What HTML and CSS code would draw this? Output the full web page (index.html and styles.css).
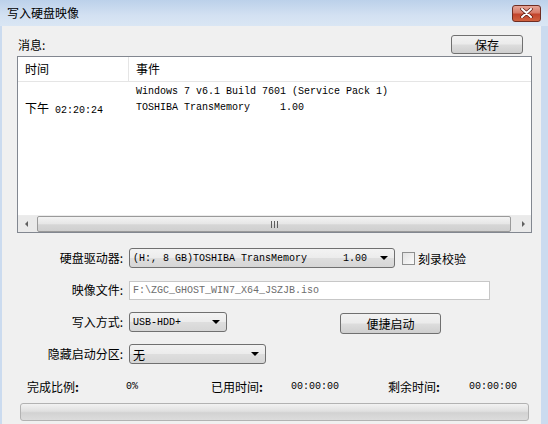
FILE: index.html
```html
<!DOCTYPE html>
<html lang="zh-CN">
<head>
   <meta charset="UTF-8">
   <title>写入硬盘映像</title>
   <link rel="stylesheet" href="styles.css">
</head>
<body>
   <div class="window">
      <div class="titlebar">
         <span class="title">写入硬盘映像</span>
         <span class="close-btn">
            <svg width="13" height="10" viewBox="0 0 13 10">
               <path d="M2 1 L11 9 M11 1 L2 9" stroke="#5a1a10" stroke-width="3.4" stroke-linecap="round"/>
               <path d="M2 1 L11 9 M11 1 L2 9" stroke="#fff" stroke-width="2" stroke-linecap="round"/>
            </svg>
         </span>
      </div>
      <div class="client">
         <div class="msg-head">
            <span>消息:</span>
            <span class="btn save-btn">保存</span>
         </div>
         <div class="list">
            <div class="list-head">
               <div class="col-time">时间</div>
               <div class="col-event">事件</div>
            </div>
            <div class="list-body">
               <div class="cell-time"></div>
               <div class="cell-event">Windows 7 v6.1 Build 7601 (Service Pack 1)</div>
               <div class="cell-time"><span class="cjk">下午</span> 02:20:24</div>
               <div class="cell-event">TOSHIBA TransMemory     1.00</div>
            </div>
            <div class="hscroll">
               <span class="sb-arrow sb-left"></span>
               <div class="sb-track">
                  <div class="sb-thumb"><span class="grip"></span></div>
               </div>
               <span class="sb-arrow sb-right"></span>
            </div>
         </div>

         <div class="form">
            <label>硬盘驱动器:</label>
            <div class="ctrl-row">
               <div class="combo combo-drive"><span class="mono">(H:, 8 GB)TOSHIBA TransMemory      1.00</span><i class="arrow"></i></div>
               <span class="checkbox"></span>
               <span>刻录校验</span>
            </div>

            <label>映像文件:</label>
            <div class="ctrl-row">
               <div class="textbox mono">F:\ZGC_GHOST_WIN7_X64_JSZJB.iso</div>
            </div>

            <label>写入方式:</label>
            <div class="ctrl-row">
               <div class="combo combo-mode"><span class="mono">USB-HDD+</span><i class="arrow"></i></div>
               <span class="btn quick-btn">便捷启动</span>
            </div>

            <label>隐藏启动分区:</label>
            <div class="ctrl-row">
               <div class="combo combo-hide"><span>无</span><i class="arrow"></i></div>
            </div>
         </div>

         <div class="stats">
            <span>完成比例<b>:</b></span>
            <span class="mono">0%</span>
            <span>已用时间<b>:</b></span>
            <span class="mono">00:00:00</span>
            <span>剩余时间<b>:</b></span>
            <span class="mono">00:00:00</span>
         </div>

         <div class="progress"></div>
      </div>
   </div>
</body>
</html>
```

FILE: styles.css
```css
* {
   box-sizing: border-box;
}
body {
   margin: 0;
   width: 548px;
   height: 424px;
   overflow: hidden;
   background: #f0f0f0;
   font-family: "Noto Sans CJK SC", "Liberation Sans", sans-serif;
   font-size: 12px;
   color: #000;
}
.mono {
   font-family: "Liberation Mono", "Noto Sans CJK SC", monospace;
   font-size: 10px;
   white-space: pre;
}
.cjk {
   font-family: "Noto Sans CJK SC", sans-serif;
   font-size: 12px;
}
.window {
   display: flex;
   flex-direction: column;
   height: 424px;
}
.titlebar {
   height: 26px;
   display: flex;
   align-items: center;
   justify-content: space-between;
   padding: 0 7px 0 7px;
   background: linear-gradient(#bcd1ea, #d3e1f2 60%, #dae6f4);
}
.title {
   font-size: 12px;
   line-height: 14px;
}
.close-btn {
   width: 29px;
   height: 17px;
   display: flex;
   align-items: center;
   justify-content: center;
   border: 1px solid #6f2d22;
   border-radius: 3px;
   background: linear-gradient(#e6a597, #d77b68 45%, #c2442c 55%, #d0623f);
}
.client {
   flex: 1;
   border-left: 2px solid #cbdbef;
   border-right: 7px solid #cbdbef;
   padding: 9px 9px 0 15px;
}
.msg-head {
   height: 19px;
   display: flex;
   align-items: center;
   justify-content: space-between;
   padding-left: 1px;
}
.btn {
   display: flex;
   align-items: center;
   justify-content: center;
   border: 1px solid #707070;
   border-radius: 3px;
   background: linear-gradient(#f2f2f2, #ebebeb 48%, #dddddd 52%, #cfcfcf);
   font-size: 12px;
}
.save-btn {
   width: 72px;
   height: 19px;
   margin-right: 9px;
}

/* list view */
.list {
   margin-top: 2px;
   height: 177px;
   border: 1px solid #828790;
   background: #fff;
   display: flex;
   flex-direction: column;
}
.list-head {
   height: 25px;
   display: flex;
   border-bottom: 1px solid #e5e5e5;
   line-height: 24px;
}
.col-time {
   width: 111px;
   padding-left: 7px;
   border-right: 1px solid #e5e5e5;
}
.col-event {
   padding-left: 7px;
}
.list-body {
   flex: 1;
   display: grid;
   grid-template-columns: 111px 1fr;
   grid-auto-rows: 16px;
   align-content: start;
   padding-top: 2px;
   font-family: "Liberation Mono", monospace;
   font-size: 10px;
   line-height: 16px;
   white-space: pre;
}
.cell-time {
   padding-left: 7px;
}
.cell-event {
   padding-left: 7px;
}
.hscroll {
   height: 17px;
   display: flex;
   background: #eaeaea;
   border-top: 1px solid #ececec;
}
.sb-arrow {
   width: 17px;
   position: relative;
}
.sb-arrow::after {
   content: "";
   position: absolute;
   top: 5px;
   border-top: 3px solid transparent;
   border-bottom: 3px solid transparent;
}
.sb-left::after {
   left: 7px;
   border-right: 3px solid #606060;
}
.sb-right::after {
   left: 8px;
   border-left: 3px solid #606060;
}
.sb-track {
   flex: 1;
   padding: 0 3px 0 2px;
}
.sb-thumb {
   height: 100%;
   border: 1px solid #9a9a9a;
   border-radius: 2px;
   background: linear-gradient(#f3f3f3, #e6e6e6 50%, #d6d6d6 55%, #cfcfcf);
   display: flex;
   align-items: center;
   justify-content: center;
}
.grip {
   width: 7px;
   height: 7px;
   background: repeating-linear-gradient(90deg, #5e5e5e 0 1px, transparent 1px 3px);
}

/* form */
.form {
   margin-top: 15px;
   display: grid;
   grid-template-columns: 106px 1fr;
   grid-auto-rows: 20px;
   row-gap: 12px;
   column-gap: 6px;
}
.form label {
   text-align: right;
   line-height: 20px;
}
.ctrl-row {
   display: flex;
   align-items: center;
}
.combo {
   height: 20px;
   display: flex;
   align-items: center;
   justify-content: space-between;
   padding: 0 6px 0 3px;
   border: 1px solid #707070;
   border-radius: 3px;
   background: linear-gradient(#f3f3f3, #ececec 48%, #dedede 52%, #d6d6d6);
}
.arrow {
   border-left: 4px solid transparent;
   border-right: 4px solid transparent;
   border-top: 4px solid #000;
}
.combo-drive {
   width: 266px;
}
.combo-mode {
   width: 98px;
}
.combo-hide {
   width: 137px;
}
.checkbox {
   width: 13px;
   height: 13px;
   margin: 0 3px 0 7px;
   border: 1px solid #8e8f8f;
   background: linear-gradient(135deg, #e2e2e2, #fbfbfb);
}
.textbox {
   width: 361px;
   height: 19px;
   line-height: 17px;
   padding-left: 3px;
   border: 1px solid #c7c7c7;
   background: #fff;
   color: #6d6d6d;
}
.quick-btn {
   width: 101px;
   height: 21px;
   margin-left: 113px;
   margin-top: 2px;
}

/* stats */
.stats {
   margin-top: 16px;
   display: grid;
   grid-template-columns: 99px 85px 80px 97px 81px auto;
   padding-left: 10px;
   line-height: 14px;
   align-items: center;
}
.stats b {
   font-weight: bold;
}
.progress {
   margin: 9px 0 0 3px;
   width: 509px;
   height: 18px;
   border: 1px solid #b2b2b2;
   border-radius: 3px;
   background: linear-gradient(#f2f2f2, #e0e0e0 45%, #d2d2d2 55%, #dcdcdc);
}
```
